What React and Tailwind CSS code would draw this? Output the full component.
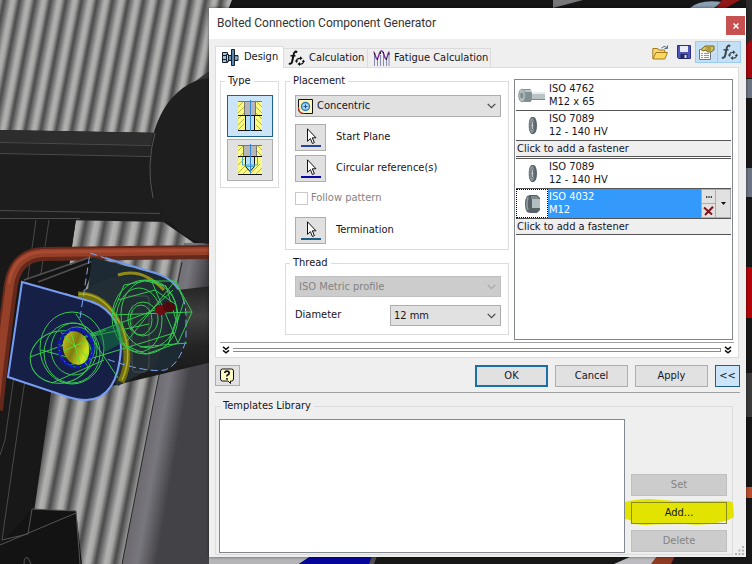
import React, { useState } from "react";

const ink = "text-[#15151f]";

function Backdrop() {
  return (
    <svg
      className="absolute inset-0 h-full w-full"
      viewBox="0 0 752 564"
      preserveAspectRatio="xMinYMin slice"
      aria-hidden="true"
    >
      <defs>
        <linearGradient id="rib" x1="0" x2="1" y1="0" y2="0">
          <stop offset="0" stopColor="#484848" />
          <stop offset="0.25" stopColor="#7c7c7c" />
          <stop offset="0.5" stopColor="#b2b2b0" />
          <stop offset="0.7" stopColor="#a8a8a6" />
          <stop offset="1" stopColor="#484848" />
        </linearGradient>
        <pattern id="ribsTop" width="15.5" height="600" patternUnits="userSpaceOnUse" patternTransform="translate(4 0) skewX(-11)">
          <rect width="15.5" height="600" fill="url(#rib)" />
        </pattern>
        <pattern id="ribsLow" width="19" height="600" patternUnits="userSpaceOnUse" patternTransform="translate(129 0) skewX(-11)">
          <rect width="19" height="600" fill="url(#rib)" />
        </pattern>
        <linearGradient id="panel" gradientUnits="userSpaceOnUse" x1="150" y1="400" x2="184" y2="406">
          <stop offset="0" stopColor="#6a686d" />
          <stop offset="0.45" stopColor="#79777e" />
          <stop offset="1" stopColor="#434246" />
        </linearGradient>
        <linearGradient id="pipe" x1="0" x2="0" y1="0" y2="1">
          <stop offset="0" stopColor="#242424" />
          <stop offset="0.3" stopColor="#414141" />
          <stop offset="0.6" stopColor="#242424" />
          <stop offset="1" stopColor="#161616" />
        </linearGradient>
        <linearGradient id="bore" x1="0" x2="1" y1="0" y2="1">
          <stop offset="0" stopColor="#d8d820" />
          <stop offset="0.45" stopColor="#7f7a10" />
          <stop offset="0.75" stopColor="#c9e41c" />
          <stop offset="1" stopColor="#8bd018" />
        </linearGradient>
      </defs>
      <rect width="752" height="564" fill="#171717" />

      <path d="M0 0H240L212 90V140H0Z" fill="url(#ribsTop)" />
      <path d="M232 0H752V10H228Z" fill="#151515" />
      <path d="M553 0h30l-30 8z" fill="#77777a" />
      <path d="M690 8q10-9 32-6l-8 6z" fill="#8aa0b4" />
      <path d="M722 0h18l-14 8h-10z" fill="#8f1717" />

      <path d="M76 219L162 221L194 243L182 262L122 564H60L34 512Z" fill="url(#ribsLow)" />
      <path d="M184 243H212V564H122L154 400Z" fill="url(#panel)" />
      <path d="M182 262L154 400L122 564" fill="none" stroke="#29292b" />

      <path d="M0 130L170 133V222L0 219Z" fill="#1d1d1d" />
      <path d="M0 130L156 133V145L0 142Z" fill="#2d2d2d" />
      <path d="M0 143L156 145V156L0 153Z" fill="#252525" />
      <path d="M0 142.500L152 145.500M0 153.500L150 156.500M0 210.500L160 213.500M0 218.500L80 218.500" fill="none" stroke="#4b4b4b" />
      <path d="M0 219H76L48 400L32 510L0 546Z" fill="#181818" />
      <path d="M36 220L5 440L0 455M49 220L22 400L2 540" fill="none" stroke="#494949" />
      <path d="M186 88L212 69V90Z" fill="#343434" />
      <ellipse cx="213" cy="161" rx="63" ry="83" fill="#1e1e1e" />
      <path d="M155 133Q146 165 153 198" fill="none" stroke="#545454" />

      <path d="M212 252L42 254Q16 256 11 284Q3 340-4 410" fill="none" stroke="#65291b" strokeWidth="14" />
      <path d="M212 251L42 253Q15 255 10 284Q2 340-5 410" fill="none" stroke="#964029" strokeWidth="8" />
      <path d="M212 250L42 252Q13 254 9 284" fill="none" stroke="#a84b32" strokeWidth="3" />

      <path d="M160 292L212 286V362L112 386L100 340Z" fill="url(#pipe)" />
      <path d="M24 281L90 258L96 262L82 298Z" fill="#141414" />
      <path d="M24 280L88 258M38 282L96 260" fill="none" stroke="#515151" strokeWidth="1.500" />
      <path d="M92 257L160 275Q180 283 186 312Q188 352 172 367Q160 375 130 368L82 340Z" fill="#1d2a33" />
      <path d="M80 294Q112 270 140 277Q166 290 168 330L156 366L118 386L96 360Z" fill="#222d34" />
      <path d="M118 275Q142 267 164 290" fill="none" stroke="#8f8b14" strokeWidth="3" />
      <path d="M78 295Q104 294 119 325Q134 355 121 382" fill="none" stroke="#737011" strokeWidth="7" />
      <path d="M79 294Q104 292 121 325Q134 355 122 380" fill="none" stroke="#b1ad25" strokeWidth="1.500" />
      <path d="M22 282L82 299Q121 307 121 348Q118 399 86 400Q78 400 68 397L8 377Z" fill="#162047" stroke="#789cf2" strokeWidth="2" />
      <path d="M105 258L152 272Q172 278 178 289" fill="none" stroke="#7099ea" strokeWidth="2" />
      <path d="M80 318L90 253L105 258M178 288Q186 300 186 318V340Q179 365 165 370Q145 373 104 358" fill="none" stroke="#7fa6f2" strokeDasharray="7 4" />
      <path d="M128 296h18q3 0 3 4v64q0 8-6 8h-8q-3 0-3-8V305" fill="none" stroke="#4b5154" />

      <g fill="none" stroke="#35c94e">
        <ellipse cx="72" cy="348" rx="32" ry="36" />
        <ellipse cx="61" cy="357" rx="31" ry="26" transform="rotate(-12 61 357)" />
        <ellipse cx="72" cy="353" rx="28" ry="30" />
        <ellipse cx="74" cy="349" rx="23" ry="26" />
        <ellipse cx="77" cy="347" rx="18" ry="20" />
        <path d="M30 357L106 330M61 332L89 368M41 350L86 362M52 383L104 360M62 345L160 308M70 365L174 333M76 314L118 378M92 336L149 324" />
        <ellipse cx="145" cy="317" rx="33" ry="37" />
        <ellipse cx="149" cy="314" rx="28" ry="34" />
        <ellipse cx="139" cy="320" rx="23" ry="32" />
        <ellipse cx="143" cy="319" rx="15" ry="17" />
        <ellipse cx="141" cy="320" rx="11" ry="15" />
        <path d="M124 285L145 281L175 281L192 312L178 343L146 354L124 345L112 315ZM112 315L192 312M124 345L175 281M152 282L178 343M130 330L173 290M118 300L155 290L175 304" />
        <path d="M146 281L166 286L176 320L168 345M176 281L184 301L177 323M140 347L187 343" />
      </g>
      <path d="M96 332L121 322L124 342L105 352Z" fill="#12843a" fillOpacity="0.45" />
      <ellipse cx="76" cy="348" rx="17" ry="19" fill="none" stroke="#1616c8" strokeWidth="3" strokeDasharray="5 1" />
      <ellipse cx="76" cy="348" rx="13" ry="17" fill="url(#bore)" transform="rotate(-15 76 348)" />
      <path d="M66 338L88 358M64 351L86 341M71 332L80 364" fill="none" stroke="#54e032" />
      <ellipse cx="161" cy="310" rx="6" ry="5" fill="#6d0d12" />
      <ellipse cx="169" cy="307" rx="6" ry="5" fill="#4e090d" />

      <path d="M32 509L76 511L82 564H0V545Z" fill="#131313" />
      <path d="M32 509L76 511L80 564M0 545L76 513M2 540L28 534L32 509M24 564q0-8 4-6l3 6" fill="none" stroke="#555" />

      <rect x="746" width="6" height="48" fill="#2b2b2b" />
      <path d="M746 45l6-6v39h-6z" fill="#a30710" />
      <path d="M746 79h6v19h-6zM746 168h6v29h-6z" fill="#6c7482" />
      <path d="M746 267h6v51h-6z" fill="#b20309" />
      <path d="M746 373h6v44h-6z" fill="#3a3a3a" />
      <path d="M746 487h6v11h-6z" fill="#b84e2f" />

      <path d="M209 556h102l-12 8h-90z" fill="#b5b5b7" />
      <path d="M311 556h61v8h-73z" fill="#05059b" />
      <path d="M372 556h5l-3 8h-5z" fill="#515151" />
      <path d="M632 556h28l-4 8h-42z" fill="#bdbdc1" />
      <path d="M657 556h18l-4 8h-20z" fill="#8e3a22" />
    </svg>
  );
}

function BoltIcon() {
  return (
    <svg width="17" height="17" viewBox="0 0 17 17" aria-hidden="true">
      <path d="M.5 3.500h5v10h-5zM.5 6.500h5M.5 10.500h5" fill="#a9c0d4" stroke="#15212e" />
      <path d="M5 6.500h11v5H5z" fill="#6d96b8" stroke="#15212e" />
      <path d="M9.500.5h3v16h-3z" fill="#5b87ac" stroke="#15212e" />
      <path d="M4.500 5.500h2v7h-2z" fill="#c1d3e0" stroke="#15212e" />
      <path d="M13 9h3" stroke="#a9c0d4" />
    </svg>
  );
}

function FxIcon({ color = "#111" }) {
  return (
    <svg width="17" height="17" viewBox="0 0 17 17" fill="none" stroke={color} aria-hidden="true">
      <path d="M9 2.500C7.500.7 6 2 5.500 5L4.300 11C3.800 13.500 2.500 14.500 1 13.200" strokeWidth="2" />
      <path d="M2.500 5.800h5" strokeWidth="1.500" />
      <path d="M8.500 11.500c-.2-2.300 1.500-3.600 4-3M15.500 11c.2 2.300-1.500 3.600-4 3" strokeWidth="1.200" />
      <path d="M12 6.300v4l2.600-2zM12 12v4l-2.600-2zM6.800 10.500h3.400l-1.700 2.500zM13.800 12h3.200l-1.500-2.500z" fill={color} stroke="none" />
    </svg>
  );
}

function FatigueIcon() {
  return (
    <svg width="17" height="17" viewBox="0 0 17 17" fill="none" aria-hidden="true">
      <path d="M1.500 3v13M4.500 8v8M7.500 5v11M10.500 5v11M13.500 8v8M16 3v13" stroke="#8588b5" />
      <path d="M.5 2C2 2 2.500 9 4 9S6 1 8.500 1 11.500 9 13 9s1.500-7 3.500-7" stroke="#762a9c" strokeWidth="1.400" />
      <path d="M1 4h1M4 9h1M7 3h1M10 3h1M13 9h1M15.500 4h1" stroke="#222" strokeWidth="2" />
    </svg>
  );
}

function FolderIcon() {
  return (
    <svg width="17" height="15" viewBox="0 0 17 15" aria-hidden="true">
      <path d="M.8 13.500V3.500h5l1 1.500h6v3" fill="#f4d774" stroke="#a57c1d" />
      <path d="M1 14l3-6.500h11.500L12.800 14z" fill="#fbd860" stroke="#a57c1d" />
      <path d="M9.500 3Q12 0 15 2.500M15.500.5v3h-3" fill="none" stroke="#55698a" />
    </svg>
  );
}

function SaveIcon() {
  return (
    <svg width="14" height="14" viewBox="0 0 14 14" aria-hidden="true">
      <path d="M.5.5h13v13h-12l-1-1z" fill="#4d55ba" stroke="#2c327e" />
      <path d="M3 1h8v6H3z" fill="#e8ecf8" />
      <path d="M3.500 9h7v5h-7z" fill="#252a60" />
      <path d="M7.500 10h2v3h-2z" fill="#dfe3f2" />
    </svg>
  );
}

function PropertiesIcon() {
  return (
    <svg width="17" height="15" viewBox="0 0 17 15" aria-hidden="true">
      <path d="M1.500 4.500h11v10h-11z" fill="#fcfcfc" stroke="#6b7785" />
      <path d="M3 8.500h2M3 10.500h2M3 12.500h2M6 8.500h5M6 10.500h5M6 12.500h5" stroke="#7f9dbd" />
      <path d="M3 4.500L7 1h9v4l-3 2H9.500L8 5 5 6z" fill="#d6c05a" stroke="#77681f" />
      <path d="M8 3h5M9 5h4" stroke="#8c7a28" />
    </svg>
  );
}

function ThroughHoleIcon() {
  return (
    <svg width="24" height="32" viewBox="0 0 24 32" aria-hidden="true">
      <path d="M0 1h24v29H0z" fill="#fafa84" />
      <path d="M0 7l6-6M0 13l6-6M0 19l6-6M0 25l6-6M0 30l6-6M18 1l6 6M18 7l6 6M18 13l6 6M18 19l6 6M18 25l5 5" stroke="#b8b440" />
      <path d="M6 1h12v14H6z" fill="#b6b6b6" />
      <path d="M7 15h10v15H7z" fill="#b9dcf7" />
      <path d="M6.500 1v14M17.500 1v14M0 1.500h24" stroke="#777" fill="none" />
      <path d="M7.500 15v15M16.500 15v15M0 15.500h24M0 30.500h24" stroke="#111" fill="none" />
      <path d="M12.500 0v31" stroke="#3385d8" />
    </svg>
  );
}

function BlindHoleIcon() {
  return (
    <svg width="24" height="32" viewBox="0 0 24 32" aria-hidden="true">
      <path d="M0 1h24v29H0z" fill="#fafa84" />
      <path d="M0 7l5-5M0 14l5-5M0 21l6-6M0 29l7-7M5 30l6-6M12 30l10-10M18 30l6-6M19 1l5 5M19 7l5 5" stroke="#b8b440" />
      <path d="M5 1h14v11H5z" fill="#b6b6b6" />
      <path d="M5.500 1v11M18.500 1v11M0 1.500h24" stroke="#777" fill="none" />
      <path d="M7.500 12.500h9v10l-4.500 5-4.500-5z" fill="#b9dcf7" stroke="#111" />
      <path d="M4.500 13v8h15v-8M7.500 22.500h9" stroke="#42a7c8" fill="none" />
      <path d="M0 12.500h24M0 30.500h24" stroke="#111" />
      <path d="M12.500 0v29" stroke="#3385d8" />
    </svg>
  );
}

function ConcentricIcon() {
  return (
    <svg className="shrink-0" width="15" height="15" viewBox="0 0 15 15" aria-hidden="true">
      <path d="M.5.5h14v14h-9q-5 0-5-5z" fill="#fbf6bd" stroke="#111" />
      <path d="M.5 8q0 6.500 6 6.500" fill="none" stroke="#d6221a" />
      <circle cx="7.500" cy="7.500" r="4" fill="#a9d6f5" stroke="#2f78b7" strokeWidth="1.400" />
      <path d="M7.500 5.500v4M5.500 7.500h4" stroke="#22588c" />
    </svg>
  );
}

function PickIcon({ line }) {
  return (
    <svg width="22" height="20" viewBox="0 0 22 20" aria-hidden="true">
      <path d="M7.500.8v12.500l2.900-2.700 2 4.900 2-.9-2.100-4.800h3.700z" fill="#fff" stroke="#111" />
      <path d="M1 18h20" stroke={line} strokeWidth="2" />
    </svg>
  );
}

function Chevron({ color = "#444" }) {
  return (
    <svg className="pointer-events-none shrink-0" width="9" height="6" viewBox="0 0 9 6" fill="none" aria-hidden="true">
      <path d="M.7.900L4.500 4.700 8.300.900" stroke={color} strokeWidth="1.200" />
    </svg>
  );
}

function Fold() {
  return (
    <svg className="shrink-0" width="8" height="8" viewBox="0 0 8 8" fill="none" stroke="#111" strokeWidth="1.500" aria-hidden="true">
      <path d="M1 .8L4 3.300 7 .8M1 4.300L4 6.800 7 4.300" />
    </svg>
  );
}

function ScrewArt() {
  return (
    <svg width="28" height="16" viewBox="0 0 28 16" aria-hidden="true">
      <path d="M13 4h14v8H13z" fill="#b9c2c4" />
      <path d="M13 5h14" stroke="#e7eded" strokeWidth="2" />
      <path d="M13 11.500h14" stroke="#7f898c" />
      <path d="M4 1h8q2 1 2 7t-2 6H4z" fill="#829093" />
      <path d="M4 3h9" stroke="#bcc7c9" strokeWidth="2" />
      <ellipse cx="4" cy="7.500" rx="3.300" ry="6.300" fill="#b5c0c2" stroke="#8b989b" />
      <ellipse cx="3.800" cy="7.500" rx="1.600" ry="3" fill="#7d8d91" />
    </svg>
  );
}

function WasherArt() {
  return (
    <svg width="28" height="19" viewBox="0 0 28 19" aria-hidden="true">
      <ellipse cx="15.500" cy="9.500" rx="3.500" ry="8.500" fill="#566265" />
      <ellipse cx="14" cy="9.500" rx="2.800" ry="8.300" fill="#899598" stroke="#5e6a6d" />
      <ellipse cx="14.200" cy="9.500" rx="1.200" ry="4.200" fill="#e6ecec" stroke="#4f5a5d" />
    </svg>
  );
}

function NutArt() {
  return (
    <svg width="28" height="20" viewBox="0 0 28 20" aria-hidden="true">
      <path d="M9 2l3-1h7l3 3v12l-3 3h-7l-3-1q-2-3-2-8t2-8z" fill="#566265" />
      <path d="M14 5h8v9h-8z" fill="#b2bebf" />
      <path d="M13 2h6l2 3h-8z" fill="#7e8b8e" />
      <path d="M10 3q-2 7 0 13" fill="none" stroke="#96a3a6" strokeWidth="1.500" />
    </svg>
  );
}

function Group({ title, className = "", children }) {
  return (
    <fieldset className={`min-w-0 border border-[#dcdcdc] ${className}`}>
      <legend className="ml-1 px-[3px] leading-[14px]">{title}</legend>
      {children}
    </fieldset>
  );
}

function PickRow({ id, label, line, tint }) {
  return (
    <div className="flex items-center gap-[10px]">
      <button id={id} type="button" className={`flex h-[27px] w-[31px] items-center justify-center border border-[#adadad] ${tint}`}>
        <PickIcon line={line} />
      </button>
      <label htmlFor={id}>{label}</label>
    </div>
  );
}

function Fastener({ art, name, size, children, selected }) {
  return (
    <li className={`flex h-[30px] border-b border-[#555] ${selected ? "bg-[#3399fb] text-white" : "bg-white"}`}>
      <span className={`flex w-8 shrink-0 items-center justify-center bg-white ${selected ? "border border-dotted border-black" : ""}`}>{art}</span>
      <span className="flex-1 pt-px pl-px leading-[13px]">
        {name}
        <br />
        {size}
      </span>
      {children}
    </li>
  );
}

function AddFastener({ last }) {
  return (
    <li className={last ? "border-b border-[#555]" : "border-b-[3px] border-double border-[#555]"}>
      <button type="button" className="block h-[15px] w-full bg-[#efefef] px-px text-left leading-[15px]">
        Click to add a fastener
      </button>
    </li>
  );
}

const pushButton = "h-[22px] border text-center";

export default function App() {
  const [follow, setFollow] = useState(false);
  return (
    <div className={`relative flex min-h-screen overflow-hidden pt-2 pr-[6px] pb-[7px] pl-[209px] font-['DejaVu_Sans_Condensed','DejaVu_Sans',sans-serif] text-[11px] ${ink}`}>
      <Backdrop />
      <main role="dialog" aria-labelledby="title" className="relative flex min-w-0 flex-1 flex-col bg-[#efefef] shadow-[0_0_3px_#0008]">
        <header className="flex h-[31px] justify-between bg-white pl-2">
          <h1 id="title" className="font-[Roboto,'Noto_Sans',sans-serif] text-[12px] leading-[31px] text-[#333]">
            Bolted Connection Component Generator
          </h1>
          <button type="button" aria-label="Close" className="mt-2 mr-px flex h-[19px] w-[19px] items-center justify-center bg-[#c75050]">
            <svg width="6" height="6" viewBox="0 0 6 6" aria-hidden="true">
              <path d="M.5.5l5 5M5.500.5l-5 5" stroke="#fff" strokeWidth="1.500" />
            </svg>
          </button>
        </header>

        <div className="flex flex-1 flex-col px-[6px]">
          <div className="flex h-7 justify-between">
            <div role="tablist" className="flex items-end">
              <button role="tab" aria-selected="true" type="button" className="relative z-10 -mb-px flex h-[22px] w-[69px] items-center gap-[5px] border border-b-0 border-[#dcdcdc] bg-white pl-[6px]">
                <BoltIcon />
                Design
              </button>
              <button role="tab" aria-selected="false" type="button" className="flex h-[19px] w-[84px] items-center gap-1 border-t border-r border-[#dcdcdc] pl-1">
                <FxIcon />
                Calculation
              </button>
              <button role="tab" aria-selected="false" type="button" className="flex h-[19px] w-[123px] items-center gap-1 border-t border-r border-[#dcdcdc] pl-[5px]">
                <FatigueIcon />
                Fatigue Calculation
              </button>
            </div>
            <div role="toolbar" className="mt-[2px] -mr-px flex h-[22px] items-center">
              <button type="button" aria-label="Open" className="mr-2"><FolderIcon /></button>
              <button type="button" aria-label="Save" className="mr-1"><SaveIcon /></button>
              <button type="button" aria-label="Properties" className="flex h-[22px] w-[23px] items-center justify-center border border-[#99cdf5] bg-[#c5e0f4]"><PropertiesIcon /></button>
              <button type="button" aria-label="Recalculate" className="flex h-[22px] w-[23px] items-center justify-center border border-l-0 border-[#99cdf5] bg-[#c5e0f4]"><FxIcon color="#3c4650" /></button>
            </div>
          </div>

          <section role="tabpanel" className="mr-px border border-[#dcdcdc] bg-white px-1 pt-[6px] pb-[3px]">
            <div className="flex">
              <Group title="Type" className="mr-[6px] h-[114px] w-[59px] shrink-0">
                <div className="flex flex-col items-center gap-[2px] pt-[7px]">
                  <button type="button" aria-label="Through all" className="flex h-[42px] w-[46px] items-center justify-center border border-[#1c5f95] bg-[#cce4f7]"><ThroughHoleIcon /></button>
                  <button type="button" aria-label="Blind" className="flex h-[42px] w-[46px] items-center justify-center border border-[#adadad] bg-[#e1e1e1]"><BlindHoleIcon /></button>
                </div>
              </Group>

              <div className="w-[224px] shrink-0">
                <Group title="Placement" className="h-[176px]">
                  <div className="pt-[7px] pr-[7px] pl-[9px]">
                    <div className="flex h-[22px] items-center border border-[#adadad] bg-[#e1e1e1] pr-1 pl-[2px]">
                      <ConcentricIcon />
                      <select aria-label="Placement" className="h-5 min-w-0 flex-1 appearance-none bg-transparent pt-px pl-1">
                        <option>Concentric</option>
                      </select>
                      <Chevron />
                    </div>
                    <div className="mt-[7px] flex flex-col gap-1">
                      <PickRow id="start" label="Start Plane" line="#27459c" tint="bg-[#e1e1e1]" />
                      <PickRow id="circular" label="Circular reference(s)" line="#0808a6" tint="bg-[#e1e1e1]" />
                    </div>
                    <label className="mt-[9px] flex h-[14px] items-center gap-[3px] text-[#838383]">
                      <input type="checkbox" disabled checked={follow} onChange={(e) => setFollow(e.target.checked)} className="h-[13px] w-[13px] appearance-none border border-[#c9c9c9] bg-white" />
                      Follow pattern
                    </label>
                    <div className="mt-3">
                      <PickRow id="termination" label="Termination" line="#1f5f86" tint="bg-[#e1e1e1]" />
                    </div>
                  </div>
                </Group>
                <Group title="Thread" className="mt-[6px] h-[79px]">
                  <div className="pt-[6px] pr-[7px] pl-[9px]">
                    <div className="flex h-[21px] items-center border border-[#bfbfbf] bg-[#cccccc] pr-1">
                      <select aria-label="Thread" disabled className="h-5 min-w-0 flex-1 appearance-none bg-transparent pt-px pl-[3px] text-[#838383] opacity-100">
                        <option>ISO Metric profile</option>
                      </select>
                      <Chevron color="#a8a8a8" />
                    </div>
                    <div className="mt-2 flex items-center justify-between">
                      <label htmlFor="diameter">Diameter</label>
                      <div className="flex h-[21px] w-[111px] items-center border border-[#adadad] bg-[#e1e1e1] pr-1">
                        <select id="diameter" className="h-5 min-w-0 flex-1 appearance-none bg-transparent pt-px pl-[3px]">
                          <option>12 mm</option>
                        </select>
                        <Chevron />
                      </div>
                    </div>
                  </div>
                </Group>
              </div>

              <ul className="mt-[5px] mr-px ml-[5px] h-[261px] min-w-0 flex-1 border border-[#828790] p-px">
                <Fastener art={<ScrewArt />} name="ISO 4762" size="M12 x 65" />
                <Fastener art={<WasherArt />} name="ISO 7089" size="12 - 140 HV" />
                <AddFastener />
                <Fastener art={<WasherArt />} name="ISO 7089" size="12 - 140 HV" />
                <Fastener art={<NutArt />} name="ISO 4032" size="M12" selected>
                  <span className="flex w-[15px] flex-col bg-[#e1e1e1] text-black">
                    <button type="button" aria-label="More" className="flex h-[15px] items-center justify-center border border-[#adadad]">
                      <svg width="6" height="2" viewBox="0 0 6 2" aria-hidden="true"><path d="M0 1h1.300M2.400 1h1.300M4.700 1H6" stroke="#111" strokeWidth="1.500" /></svg>
                    </button>
                    <button type="button" aria-label="Remove" className="flex h-[14px] items-center justify-center border border-t-0 border-[#adadad]">
                      <svg width="11" height="10" viewBox="0 0 11 10" aria-hidden="true"><path d="M1 1.500l8 7M10 .8L2 9" stroke="#831318" strokeWidth="2" /></svg>
                    </button>
                  </span>
                  <button type="button" aria-label="Choose" className="flex w-[15px] items-center justify-center border border-l-0 border-[#adadad] bg-[#e1e1e1]">
                    <svg width="5" height="3" viewBox="0 0 5 3" aria-hidden="true"><path d="M0 0h5L2.500 3z" fill="#111" /></svg>
                  </button>
                </Fastener>
                <AddFastener last />
              </ul>
            </div>
            <div className="mt-[2px] flex items-center gap-[3px] border-t border-[#a0a0a0] px-[2px] pt-[3px]">
              <Fold />
              <span className="h-1 flex-1 border-y border-r border-[#8c8c8c]" />
              <Fold />
            </div>
          </section>

          <div className="mt-[7px] flex gap-[7px]">
            <button type="button" aria-label="Help" className="mr-auto flex h-[21px] w-[25px] items-center justify-center border border-[#adadad] bg-[#e1e1e1]">
              <svg width="15" height="16" viewBox="0 0 15 16" aria-hidden="true">
                <path d="M2.500 1h9q2 0 2 2v8q0 2-2 2h-1v2.500L8 13H2.500q-2 0-2-2V3q0-2 2-2z" fill="#fdfcc7" stroke="#111" />
                <path d="M4.800 5q.2-1.800 2.200-1.800T9.200 5q0 1.200-1.200 1.800T7 8.500M7 10v1.700" fill="none" stroke="#111" strokeWidth="1.700" />
              </svg>
            </button>
            <button type="button" className={`${pushButton} w-[73px] border-2 border-[#1c6ea8] bg-[#e1e1e1]`}>OK</button>
            <button type="button" className={`${pushButton} w-[73px] border-[#adadad] bg-[#e1e1e1]`}>Cancel</button>
            <button type="button" className={`${pushButton} w-[73px] border-[#adadad] bg-[#e1e1e1]`}>Apply</button>
            <button type="button" className={`${pushButton} w-[25px] border-[#1c5f95] bg-[#cce4f7]`}>&lt;&lt;</button>
          </div>

          <hr className="mt-[5px] border-[#a0a0a0]" />

          <div className="relative mt-[6px] mb-[2px] flex flex-1">
            <Group title="Templates Library" className="mr-[7px] flex-1">
              <div className="flex h-full pt-[6px] pr-[5px] pl-[3px]">
                <div role="listbox" aria-label="Templates Library" className="mr-[6px] h-[134px] flex-1 border border-[#828790] bg-white" />
                <div className="flex h-[133px] w-24 flex-col justify-end gap-[6px]">
                  <button type="button" disabled className={`${pushButton} border-[#bfbfbf] bg-[#cccccc] text-[#838383]`}>Set</button>
                  <div className="relative flex">
                    <svg className="absolute -top-[3px] -left-[6px]" width="109" height="28" viewBox="0 0 109 28" aria-hidden="true">
                      <path d="M0 3Q10 0 24 0L50 2L90 2Q106 1 108 4L109 18Q103 22 96 23Q80 27 60 25Q36 25 20 26L8 25L5 21L0 20Z" fill="#e3e300" />
                    </svg>
                    <button type="button" className={`${pushButton} relative flex-1 border-[#8b8b16]`}>Add...</button>
                  </div>
                  <button type="button" disabled className={`${pushButton} border-[#bfbfbf] bg-[#cccccc] text-[#838383]`}>Delete</button>
                </div>
              </div>
            </Group>
            <svg className="absolute right-[-4px] bottom-0" width="9" height="9" viewBox="0 0 9 9" fill="#b3b3b3" aria-hidden="true">
              <path d="M7 0h2v2H7zM7 3.500h2v2H7zM7 7h2v2H7zM3.500 3.500h2v2h-2zM3.500 7h2v2h-2zM0 7h2v2H0z" />
            </svg>
          </div>
        </div>
      </main>
    </div>
  );
}
